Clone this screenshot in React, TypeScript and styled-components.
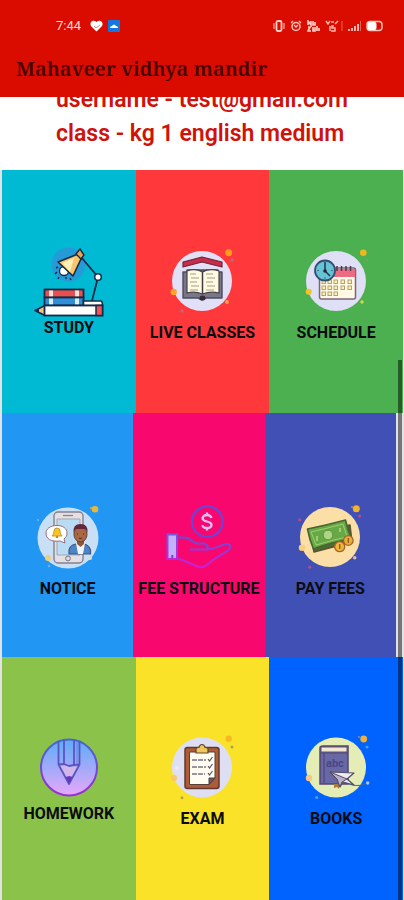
import React from "react";
import styled, { createGlobalStyle } from "styled-components";

const GlobalStyle = createGlobalStyle`
  * { box-sizing: border-box; }
  body { margin: 0; background: #ffffff; font-family: Roboto, "Liberation Sans", sans-serif; }
`;

const Page = styled.div`
  display: flex;
  flex-direction: column;
  min-height: 100vh;
`;

const Header = styled.header`
  position: relative;
  z-index: 1;
  background: #da0c00;
  padding: 16px 16px 12px;
`;

const StatusBar = styled.div`
  display: flex;
  justify-content: space-between;
  align-items: center;
  height: 20px;
  padding: 0 5px 0 40px;
  color: #ffd9d3;
  font-size: 13px;
  line-height: 20px;
`;

const StatusGroup = styled.div<{ $gap: number }>`
  display: flex;
  align-items: center;
  gap: ${(p) => p.$gap}px;
`;

const Title = styled.h1`
  margin: 16px 0 0;
  color: #470400;
  font-family: "Noto Serif", "DejaVu Serif Condensed", "DejaVu Serif", serif;
  font-size: 20px;
  font-weight: 600;
  line-height: 33px;
  white-space: nowrap;
`;

const Account = styled.section`
  margin-top: -14px;
  padding: 0 16px 19px 56px;
  color: #d01208;
  font-size: 23px;
  font-weight: 600;
  line-height: 34px;
  white-space: nowrap;
`;

const AccountLine = styled.p`
  margin: 0;
`;

const Menu = styled.main`
  position: relative;
  flex: 1;
  display: grid;
  grid-template-rows: repeat(3, minmax(160px, 1fr));
  background: #e2e2e4;
`;

const Row = styled.div<{ $inset: number }>`
  display: grid;
  grid-template-columns: repeat(3, 1fr);
  padding: 0 ${(p) => p.$inset}px 0 2px;
`;

const TileButton = styled.button<{ $color: string; $drop: number }>`
  display: flex;
  flex-direction: column;
  align-items: center;
  justify-content: center;
  gap: 1px;
  min-width: 0;
  border: 0;
  padding: ${(p) => p.$drop}px 0 0;
  background: ${(p) => p.$color};
  color: #0c0c10;
  font-family: inherit;
  font-size: 16px;
  font-weight: 700;
  line-height: 20px;
  white-space: nowrap;
  cursor: pointer;
`;

const Art = styled.svg`
  display: block;
  flex: none;
`;

const ScrollThumb = styled.div`
  position: absolute;
  top: 26%;
  right: 2px;
  bottom: 0;
  width: 4px;
  background: rgba(0, 0, 0, 0.48);
`;

type Spot = [number, number, number, string];

const Spots = ({ items }: { items: Spot[] }) => (
  <>
    {items.map(([x, y, r, fill], i) => (
      <circle key={i} cx={x} cy={y} r={r} fill={fill} />
    ))}
  </>
);

const StudyArt = () => (
  <Art width="70" height="70" viewBox="0 0 70 70" aria-hidden="true">
    <circle cx="34.5" cy="17.5" r="17" fill="#249bd7" />
    <path d="M47 10 64 30 58 54" fill="none" stroke="#142a4a" strokeWidth="1.8" />
    <circle cx="30" cy="24" r="4.5" fill="#fff" stroke="#142a4a" strokeWidth="1.3" />
    <path d="M24 15 44 7l3 5-8 17z" fill="#f8c56c" stroke="#142a4a" strokeWidth="1.6" strokeLinejoin="round" />
    <path d="m28 16 12-5-4 14z" fill="#fff0b8" />
    <path d="m42 7 4-5 4 6-3 4z" fill="#e9a54b" stroke="#142a4a" strokeWidth="1.4" />
    <path d="M24 20l-2 1M23 25l-2 2M25 30l-1 2M32 30v2M36 31l1 2" stroke="#142a4a" strokeWidth="1.4" />
    <circle cx="64" cy="30" r="3.3" fill="#fff" stroke="#142a4a" strokeWidth="1.5" />
    <rect x="10.5" y="42.5" width="39" height="8" fill="#e9504d" stroke="#142a4a" strokeWidth="1.8" />
    <path d="M15 43.5h4v6h-4zM41 43.5h4v6h-4z" fill="#ffe3dc" />
    <rect x="10.5" y="50.5" width="39" height="8" fill="#2f8fd6" stroke="#142a4a" strokeWidth="1.8" />
    <path d="M15 51.5h4v6h-4zM41 51.5h4v6h-4z" fill="#d9efff" />
    <path d="M49.5 58.5V54h17q2 0 2 4.500z" fill="#fff" stroke="#142a4a" strokeWidth="1.6" />
    <path d="m1 63.500 10-5v10z" fill="#f4c27a" stroke="#142a4a" strokeWidth="1.6" strokeLinejoin="round" />
    <path d="m1 63.500 4-2v4z" fill="#142a4a" />
    <rect x="10.500" y="58.500" width="58" height="10" fill="#fff" stroke="#142a4a" strokeWidth="1.8" />
    <rect x="62" y="58.500" width="6.500" height="10" fill="#ef5552" stroke="#142a4a" strokeWidth="1.500" />
  </Art>
);

const LiveArt = () => (
  <Art width="80" height="80" viewBox="0 0 80 80" aria-hidden="true">
    <circle cx="40" cy="39" r="30" fill="#e2e0f7" />
    <Spots items={[[66.7, 10.7, 3.5, "#ff9a1c"], [70, 18, 1.7, "#c2657e"], [11.7, 50, 3.2, "#ffa52b"], [20, 69, 1.7, "#c2657e"], [65, 60, 2, "#ffa050"]]} />
    <path d="M21 20 40 15l20 5v5l-20-5-19 5z" fill="#c52d49" stroke="#70243a" strokeWidth="1.2" strokeLinejoin="round" />
    <path d="M21 30h4v-2h31v2h4v26H44l-4 2-4-2H21z" fill="#777789" stroke="#4d4b5e" strokeWidth="1.4" strokeLinejoin="round" />
    <path d="M25 29q8-3 15.500 1Q48 26 57 29v22q-9-2-16.500 1Q33 49 25 51z" fill="#fffae2" stroke="#4a4148" strokeWidth="1.2" />
    <path d="M40.500 30v22" stroke="#443a43" strokeWidth="1.5" />
    <path d="M28 32h6m-5 4h8m-9 4h7m-6 4h8m-9 4h8M44 32h7m-6 4h8m-9 4h7m-6 4h8m-9 4h8" stroke="#a59a84" strokeWidth="1" />
    <ellipse cx="40.500" cy="56" rx="3" ry="2.500" fill="#392b39" />
  </Art>
);

const ScheduleArt = () => (
  <Art width="80" height="80" viewBox="0 0 80 80" aria-hidden="true">
    <circle cx="40" cy="39" r="30" fill="#dfdff6" />
    <Spots items={[[67.3, 10.7, 3.3, "#f4b51e"], [71, 18, 1.3, "#6fa26f"], [12.7, 49.7, 3, "#f5c229"], [20, 69, 1.3, "#6fa26f"], [66, 60, 1.7, "#d5d84c"]]} />
    <rect x="23.500" y="26" width="36" height="31" rx="2" fill="#fff9e6" stroke="#7d6677" strokeWidth="1.5" />
    <path d="M24 27h35v8H24z" fill="#ee6b84" />
    <path d="M41 24v5M45.500 24v5M50 24v5M54.500 24v5" stroke="#55344b" strokeWidth="1.500" />
    {[38, 44, 50].map((y, row) =>
      [26, 32, 38, 45, 52].slice(0, row === 2 ? 3 : 5).map((x) => (
        <rect key={`${x}-${y}`} x={x} y={y} width="3.500" height="3.500" fill="#fff0b3" stroke="#b4a178" strokeWidth="1" />
      ))
    )}
    <circle cx="29" cy="28.500" r="10" fill="#65c3d3" stroke="#344e70" strokeWidth="1.800" />
    <path d="M29 20v9l5 5" fill="none" stroke="#26314c" strokeWidth="1.500" />
    <circle cx="29" cy="29" r="1.800" fill="#26233c" />
    <path d="M21 28.500h2M35 28.500h2M29 35v2" stroke="#3d7189" />
  </Art>
);

const NoticeArt = () => (
  <Art width="80" height="80" viewBox="0 0 80 80" aria-hidden="true">
    <circle cx="40" cy="40" r="30.500" fill="#c9dff5" />
    <Spots items={[[67, 11.300, 3.300, "#e8b63a"], [63, 10, 1.200, "#aaa878"], [20, 60, 3, "#eccf7c"], [62, 60, 2, "#d9dfd0"], [21, 68, 1.300, "#75b1df"], [10, 22, 1, "#79b9ee"]]} />
    <rect x="26" y="14" width="29" height="51" rx="4" fill="#e4dfe3" stroke="#85818e" strokeWidth="1.400" />
    <path d="M29 21h23v36H29z" fill="#b9dcf3" stroke="#a4a6b5" />
    <path d="M35 17.500h10" stroke="#888" strokeWidth="1.300" />
    <circle cx="40" cy="60.500" r="2.400" fill="#ddd" stroke="#767482" />
    <path d="M29 27.500c6 0 10 3 10 7.500 0 3-1 4-3 6l1 4-5-2c-9 1-14-2-14-8 0-4 4-7.500 11-7.500z" fill="#fff" stroke="#8e7280" />
    <path d="M24 38q2-2 2-5 0-3 3-3t3 3q0 3 2 5z" fill="#f7c526" stroke="#b98d1d" strokeWidth=".8" />
    <circle cx="29" cy="39" r="1.300" fill="#c29213" />
    <path d="M41 56v-4q1-5 7-6h8q5 1 6.500 6v4z" fill="#4d83c7" stroke="#385987" strokeWidth="1.200" />
    <path d="M48 45h9l-2 11h-5z" fill="#f2f5fa" />
    <path d="M49 40h7v6l-3.500 3-3.500-3z" fill="#91583a" />
    <ellipse cx="52.500" cy="36.500" rx="6.500" ry="7.500" fill="#a76843" stroke="#6a3c32" />
    <path d="M45.500 35q-1-9 7-9t7 9l-2-4h-10z" fill="#642638" />
    <path d="M49 36h1m5 0h1m-5 4q1.500 1 3 0" stroke="#422528" fill="none" />
  </Art>
);

const FeeArt = () => (
  <Art width="80" height="80" viewBox="0 0 80 80" aria-hidden="true">
    <defs>
      <linearGradient id="feeLine" x1="0" y1="0" x2="0" y2="1">
        <stop offset="0" stopColor="#604edc" />
        <stop offset="1" stopColor="#cf1ed5" />
      </linearGradient>
      <linearGradient id="cuffLine" x1="0" y1="0" x2="0" y2="1">
        <stop offset="0" stopColor="#7655e5" />
        <stop offset="1" stopColor="#b929e0" />
      </linearGradient>
    </defs>
    <circle cx="48.300" cy="23.700" r="15.300" fill="none" stroke="#7042d3" strokeWidth="2.200" />
    <path d="M52.500 20q-1-3-4.500-3t-4.500 3q0 2.500 4.500 3.500t4.500 3.500q0 3-4.500 3t-4.500-3M48 14.500v3m0 12v3" fill="none" stroke="#d8c2fa" strokeWidth="2.300" />
    <rect x="8.500" y="36.500" width="9.500" height="24.500" fill="#c1b1ff" stroke="url(#cuffLine)" strokeWidth="2" />
    <path d="M13.300 57v3" stroke="#8738d6" strokeWidth="2" />
    <path d="M18 39.500h8c6 0 7 6 13 6h6q4 1 4 6H31m18-.500c8 0 14-5 19-5q4 0 3 4c-1 3-10 7-17 12-7 6-10 8-14 7L18 60" fill="none" stroke="url(#feeLine)" strokeWidth="2" strokeLinejoin="round" />
  </Art>
);

const PayArt = () => (
  <Art width="80" height="80" viewBox="0 0 80 80" aria-hidden="true">
    <circle cx="40" cy="39" r="30" fill="#fbdfa6" />
    <Spots items={[[66.300, 10.700, 3.500, "#f2b32e"], [62, 9, 1, "#c98f51"], [69.700, 18, 1.500, "#c24a83"], [9.700, 21.700, 1.500, "#c24a83"], [12, 49.700, 3.200, "#f9cf77"], [19.700, 69.300, 1.500, "#c24a83"], [64.700, 59.700, 1.800, "#e8b9a1"]]} />
    <path d="M20 34 60 27l2 17-38 10z" fill="#486c35" stroke="#5d512e" strokeWidth="1.500" strokeLinejoin="round" />
    <path d="M17.500 31q20-4 38-9 2 10 6 19-20 3-38 10-4-9-6-20z" fill="#68a947" stroke="#49652f" strokeWidth="1.600" strokeLinejoin="round" />
    <path d="M21 34q17-4 32-8l4 13q-15 3-31 8z" fill="none" stroke="#9fce6c" strokeWidth="1" />
    <circle cx="38" cy="37" r="4.800" fill="#aed581" stroke="#5b9642" />
    <path d="M27 38v5M50 30v4" stroke="#b3d881" strokeWidth="1.500" />
    <circle cx="58.300" cy="42.500" r="4.800" fill="#eaae32" stroke="#a5632b" strokeWidth="1.300" />
    <circle cx="49.700" cy="48.700" r="5" fill="#efb53b" stroke="#a5632b" strokeWidth="1.300" />
    <path d="M49.700 46v5M58.300 40v5" stroke="#9a5c23" strokeWidth="1.400" />
  </Art>
);

const HomeworkArt = () => (
  <Art width="70" height="70" viewBox="0 0 70 70" aria-hidden="true">
    <defs>
      <linearGradient id="hwFill" x1="0" y1="0" x2="0" y2="1">
        <stop offset="0" stopColor="#5badf8" />
        <stop offset="1" stopColor="#e7a7fa" />
      </linearGradient>
      <linearGradient id="hwLine" x1="0" y1="0" x2="0" y2="1">
        <stop offset="0" stopColor="#4767d3" />
        <stop offset="1" stopColor="#9b2ed0" />
      </linearGradient>
    </defs>
    <circle cx="35" cy="34.500" r="28" fill="url(#hwFill)" stroke="url(#hwLine)" strokeWidth="2" />
    <path d="M24 32 35 51l11-19-5 2-5-2-6 1z" fill="#d1b5eb" />
    <path d="M24.500 8.500v23L35 51l10.500-19.500v-23M30 7v25M40 7v25M24.500 31.500l5.500-.500 5 2 5-1 5.500-.500" fill="none" stroke="#5b54c0" strokeWidth="1.800" strokeLinejoin="round" />
    <path d="M43 8v23" stroke="#6b7fe0" />
    <path d="m31.500 44 3.500 7 3.500-7-3-1z" fill="#6538be" />
  </Art>
);

const ExamArt = () => (
  <Art width="80" height="80" viewBox="0 0 80 80" aria-hidden="true">
    <circle cx="40" cy="39.500" r="30" fill="#dedff2" />
    <Spots items={[[66.700, 10.800, 3.200, "#f5b922"], [70, 19, 1.500, "#a7a253"], [12, 50, 3, "#f7c969"], [20, 69.800, 1.500, "#b5a642"], [15, 40, 2, "#eceafa"]]} />
    <rect x="23" y="19.500" width="34" height="41" rx="2.500" fill="#ac5c37" stroke="#61392f" strokeWidth="1.500" />
    <path d="M27.500 24H53v26l-6 6.500H27.500z" fill="#fffdf1" stroke="#59413b" />
    <path d="M47 56.500V50h6z" fill="#6f5b60" stroke="#4b3942" />
    <path d="M34 25v-4q0-1.500 3-1.500.500-3 3-3t3 3q3 0 3 1.500v4z" fill="#f0c75d" stroke="#5e482c" strokeWidth="1.200" />
    <path d="M30 32h14M30 39h14M30 46h13" stroke="#797482" strokeWidth="1.300" strokeDasharray="5 1" />
    <path d="m46 31 1.500 2 3-4M46 38l1.500 2 3-4M46 45l1.500 2 3-4" fill="none" stroke="#55515e" strokeWidth="1.200" />
  </Art>
);

const BooksArt = () => (
  <Art width="80" height="80" viewBox="0 0 80 80" aria-hidden="true">
    <circle cx="40" cy="39.500" r="30" fill="#e3edb5" />
    <Spots items={[[67.700, 11, 3.400, "#eeb03b"], [63, 9, 1, "#888f85"], [71, 19, 1.500, "#51a2be"], [13, 50, 3.200, "#f4c784"], [71.700, 55, 1.700, "#a7c8e9"], [20.700, 69.500, 1.600, "#51a2be"]]} />
    <path d="M24 20q0-2 3-2h25v38H24z" fill="#6868a5" stroke="#53466f" strokeWidth="1.500" />
    <path d="M25 19h26v5H25z" fill="#f0e7d5" stroke="#64545e" />
    <path d="M24 25h28M28 25v30" stroke="#4f487f" strokeWidth="1.200" />
    <text x="30" y="39" fill="#4a4585" fontFamily="Roboto, sans-serif" fontSize="11">abc</text>
    <path d="M38 56h5v5l-2-2-3 1z" fill="#a87b39" />
    <path d="M48 54q12 6 21 2" fill="none" stroke="#4d658e" strokeWidth="1" />
    <path d="m34 44 24 1-7 6 7 6-11-3-3 5-3-8z" fill="#eeeaf3" stroke="#554c65" strokeWidth="1.200" strokeLinejoin="round" />
    <path d="m34 44 17 7-5 3-2 5-3-8z" fill="#b8b0c6" stroke="#554c65" strokeLinejoin="round" />
  </Art>
);

interface TileData {
  label: string;
  color: string;
  art: () => React.JSX.Element;
}

const rows: { inset: number; drop: number; tiles: TileData[] }[] = [
  {
    inset: 1,
    drop: 1,
    tiles: [
      { label: "STUDY", color: "#00bad3", art: StudyArt },
      { label: "LIVE CLASSES", color: "#ff393b", art: LiveArt },
      { label: "SCHEDULE", color: "#4caf50", art: ScheduleArt },
    ],
  },
  {
    inset: 8,
    drop: 27,
    tiles: [
      { label: "NOTICE", color: "#2196f3", art: NoticeArt },
      { label: "FEE STRUCTURE", color: "#f8086e", art: FeeArt },
      { label: "PAY FEES", color: "#4050b5", art: PayArt },
    ],
  },
  {
    inset: 1,
    drop: 1,
    tiles: [
      { label: "HOMEWORK", color: "#8bc34a", art: HomeworkArt },
      { label: "EXAM", color: "#fae229", art: ExamArt },
      { label: "BOOKS", color: "#0062ff", art: BooksArt },
    ],
  },
];

const LeftStatusIcons = () => (
  <>
    <Art width="13" height="12" viewBox="0 0 13 12" aria-hidden="true">
      <path d="M6.500 11.500 1 6C-1 2 3-1 6.500 2 10-1 14 2 12 6z" fill="#fff" />
      <path d="m4 6 2 2 4-3" fill="none" stroke="#e58a84" />
    </Art>
    <Art width="12" height="12" viewBox="0 0 12 12" aria-hidden="true">
      <rect width="12" height="12" rx="1" fill="#1476df" />
      <path d="M2 8q0-2 2-2 2-3 4 0 2 0 2 2z" fill="#fff" />
    </Art>
  </>
);

const RightStatusIcons = () => (
  <>
    <Art width="12" height="12" viewBox="0 0 12 12" aria-hidden="true">
      <rect x="3.500" y="1" width="5" height="10" rx="1.500" fill="none" stroke="#ffd0c9" strokeWidth="1.800" />
      <path d="M1 3v6M11 3v6" stroke="#ff9a90" strokeWidth="1.300" />
    </Art>
    <Art width="12" height="12" viewBox="0 0 12 12" aria-hidden="true">
      <circle cx="6" cy="6.500" r="4" fill="none" stroke="#ffc4bd" strokeWidth="1.500" />
      <path d="m1 3 2-2m8 2L9 1M4 5l2 2 2-2" fill="none" stroke="#ffc4bd" strokeWidth="1.300" />
    </Art>
    <Art width="13" height="12" viewBox="0 0 13 12" aria-hidden="true">
      <path d="M1 5V1l3 4V1m2 0v4h2V2M1 7h2l-2 4h3m2-4v4h2V7M10 6v5m2-3v3" fill="none" stroke="#ffc9c2" strokeWidth="1.700" />
    </Art>
    <Art width="18" height="12" viewBox="0 0 18 12" aria-hidden="true">
      <path d="M1 1l2 3 2-3m1 1h3M13 1l-3 3M5 6v5m4-5H7v2h3v3H6" fill="none" stroke="#ffb3aa" strokeWidth="1.500" />
      <path d="M17 1v10" stroke="#ee6056" />
    </Art>
    <Art width="13" height="12" viewBox="0 0 13 12" aria-hidden="true">
      <path d="M1 9v2m3-3v3m3-5v5m3-7v7" stroke="#ffc4bd" strokeWidth="1.800" />
      <path d="M12.500 1v10" stroke="#ee6056" />
    </Art>
    <Art width="17" height="12" viewBox="0 0 17 12" aria-hidden="true">
      <rect x="1" y="1.500" width="15" height="9" rx="3" fill="none" stroke="#ffc4bd" strokeWidth="1.400" />
      <rect x="1.500" y="2" width="9" height="8" rx="2" fill="#fff" />
    </Art>
  </>
);

export default function App() {
  return (
    <Page>
      <GlobalStyle />
      <Header>
        <StatusBar>
          <StatusGroup $gap={9}>
            <span>7:44</span>
            <StatusGroup $gap={5}>
              <LeftStatusIcons />
            </StatusGroup>
          </StatusGroup>
          <StatusGroup $gap={5}>
            <RightStatusIcons />
          </StatusGroup>
        </StatusBar>
        <Title>Mahaveer vidhya mandir</Title>
      </Header>
      <Account aria-label="Account">
        <AccountLine>username - test@gmail.com</AccountLine>
        <AccountLine>class - kg 1 english medium</AccountLine>
      </Account>
      <Menu>
        {rows.map((row, i) => (
          <Row key={i} $inset={row.inset}>
            {row.tiles.map(({ label, color, art: TileArt }) => (
              <TileButton key={label} type="button" $color={color} $drop={row.drop}>
                <TileArt />
                {label}
              </TileButton>
            ))}
          </Row>
        ))}
        <ScrollThumb />
      </Menu>
    </Page>
  );
}
